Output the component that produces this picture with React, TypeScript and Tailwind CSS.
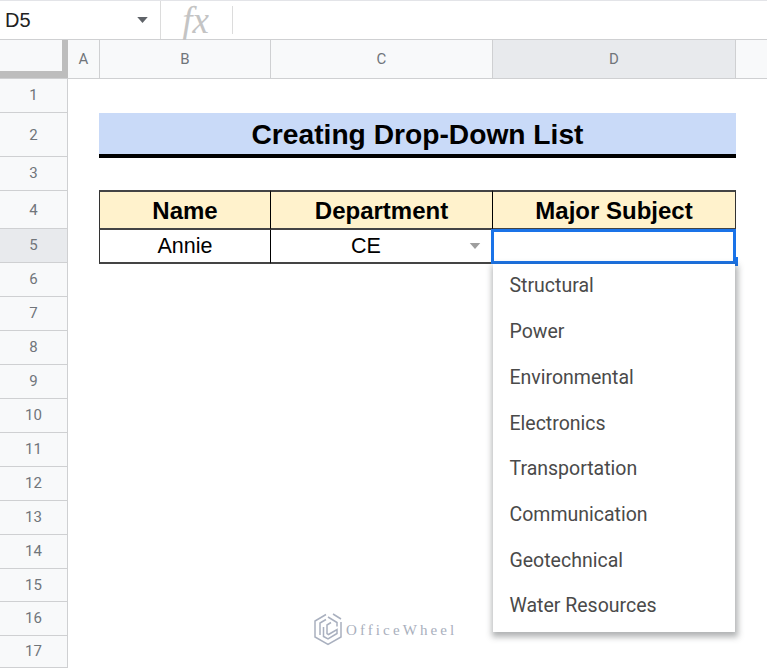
import React from 'react';

const rows = [
  { n: 1, h: 'h-[34px]' },
  { n: 2, h: 'h-[44px] pt-[2px]' },
  { n: 3, h: 'h-[34px]' },
  { n: 4, h: 'h-[38px] pt-[2px]' },
  { n: 5, h: 'h-[34px]' },
  { n: 6, h: 'h-[34px]' },
  { n: 7, h: 'h-[34px]' },
  { n: 8, h: 'h-[34px]' },
  { n: 9, h: 'h-[34px]' },
  { n: 10, h: 'h-[34px]' },
  { n: 11, h: 'h-[34px]' },
  { n: 12, h: 'h-[34px]' },
  { n: 13, h: 'h-[34px]' },
  { n: 14, h: 'h-[34px]' },
  { n: 15, h: 'h-[33px]' },
  { n: 16, h: 'h-[34px]' },
  { n: 17, h: 'h-[32px]' },
];

const options = [
  'Structural',
  'Power',
  'Environmental',
  'Electronics',
  'Transportation',
  'Communication',
  'Geotechnical',
  'Water Resources',
];

const Caret = ({ className }: { className: string }) => (
  <svg viewBox="0 0 14 8" className={className}>
    <path d="M0 0h14L7 8z" fill="currentColor" />
  </svg>
);

const FormulaBar = () => (
  <div className="flex h-10 border-t border-b border-t-[#e3e4e8] border-b-[#cfd0d2] bg-white">
    <div className="flex w-[161px] items-center justify-between border-r border-[#dcdcdc] pl-[5px] pr-[11px]">
      <span className="text-[20px] text-[#222]">D5</span>
      <Caret className="h-[6px] w-[13px] text-[#5f6368]" />
    </div>
    <div className="flex w-[71px] items-center justify-center pr-[2px]">
      <span className="font-['Liberation_Serif',serif] text-[37px] italic leading-none text-[#c4c4c4]">fx</span>
    </div>
    <div className="my-[5px] w-px bg-[#dcdcdc]" />
  </div>
);

const ColumnHeader = ({ label, width, active }: { label: string; width: string; active?: boolean }) => (
  <div
    className={`flex items-center justify-center border-r border-[#cfd0d2] font-['Roboto',sans-serif] text-[15px] text-[#70757a] ${width} ${
      active ? 'bg-[#e8eaed]' : 'bg-[#f8f9fa]'
    }`}
  >
    {label}
  </div>
);

const Logo = () => (
  <svg viewBox="0 0 30 34" className="h-[34px] w-[30px] text-[#a9b0bf]" fill="none" stroke="currentColor" strokeWidth="1.5">
    <path d="M13 2.500 2 9v16l13 7.500L28 25V10" />
    <path d="M20 2 28 7M15 5 24 10.500v4M7 23V11l6-3.500" />
    <path d="M10.500 15v9.500L15 27l9-5.500v-4l-8.500 5-1.500-1V13l4-2.500" />
  </svg>
);

export default function App() {
  return (
    <div className="relative h-[668px] w-[767px] overflow-hidden bg-white font-['Liberation_Sans',Arial,sans-serif]">
      <FormulaBar />

      {/* column letters */}
      <div className="flex h-[39px] border-b border-[#cfd0d2]">
        <div className="h-[38px] w-[68px] border-r-[6px] border-b-[7px] border-[#bdbdbd] bg-[#f8f9fa]" />
        <ColumnHeader label="A" width="w-[32px]" />
        <ColumnHeader label="B" width="w-[171px]" />
        <ColumnHeader label="C" width="w-[222px]" />
        <ColumnHeader label="D" width="w-[243px]" active />
        <div className="flex-1 bg-[#f8f9fa]" />
      </div>

      <div className="flex">
        {/* row numbers */}
        <div className="w-[68px] border-r border-[#cfd0d2]">
          {rows.map((row) => (
            <div
              key={row.n}
              className={`flex items-center justify-center border-b border-[#cfd0d2] font-['Roboto',sans-serif] text-[15px] text-[#70757a] ${row.h} ${
                row.n === 5 ? 'bg-[#e8eaed]' : 'bg-[#f8f9fa]'
              }`}
            >
              {row.n}
            </div>
          ))}
        </div>

        <div className="grid flex-1 grid-cols-[31px_172px_222px_243px_1fr] grid-rows-[34px_45px_32px_40px_34px] text-black">
          <div className="col-start-2 col-end-5 row-start-2 flex items-center justify-center border-b-[4px] border-black bg-[#c9daf8] pt-[2px] text-[28.2px] font-bold">
            Creating Drop-Down List
          </div>

          <div className="col-start-2 row-start-4 flex items-center justify-center border-y-2 border-r border-l border-y-[#444] border-r-black border-l-[#333] bg-[#fff2cc] pt-px text-[24px] font-bold">
            Name
          </div>
          <div className="col-start-3 row-start-4 flex items-center justify-center border-y-2 border-r border-y-[#444] border-r-black bg-[#fff2cc] pt-px text-[24px] font-bold">
            Department
          </div>
          <div className="col-start-4 row-start-4 flex items-center justify-center border-y-2 border-r border-y-[#444] border-r-[#333] bg-[#fff2cc] pt-px text-[24px] font-bold">
            Major Subject
          </div>

          <div className="col-start-2 row-start-5 flex items-center justify-center border-r border-b-2 border-l border-r-black border-b-[#444] border-l-[#333] text-[21.5px]">
            Annie
          </div>
          <div className="col-start-3 row-start-5 flex items-center border-r border-b-2 border-r-black border-b-[#444] pl-[80px] pr-[11px] text-[21.5px]">
            <span>CE</span>
            <Caret className="ml-auto h-[6px] w-[12px] text-[#9e9e9e]" />
          </div>
        </div>
      </div>

      {/* active cell border, drawn over the grid */}
      <div className="absolute left-[491px] top-[229px] h-[35px] w-[245px] border-[3px] border-[#1a73e8]" />
      <div className="absolute left-[734px] top-[257px] h-[9px] w-[4px] bg-[#1a73e8]" />

      {/* validation dropdown */}
      <div className="absolute left-[493px] top-[264px] flex h-[368px] w-[242px] flex-col justify-center bg-white pb-[4px] font-['Roboto',sans-serif] shadow-[1px_3px_6px_2px_rgba(60,64,67,0.4)]">
        {options.map((option) => (
          <div key={option} className="flex h-[45.7px] shrink-0 items-center pl-[16.500px] text-[19.5px] text-[#4a4a4a]">
            {option}
          </div>
        ))}
      </div>

      {/* watermark */}
      <div className="absolute left-[313px] top-[612px] flex items-center gap-[3px]">
        <Logo />
        <span className="pt-[2px] font-['Liberation_Serif',serif] text-[15px] tracking-[3.1px] text-[#a9afbd]">OfficeWheel</span>
      </div>
    </div>
  );
}
